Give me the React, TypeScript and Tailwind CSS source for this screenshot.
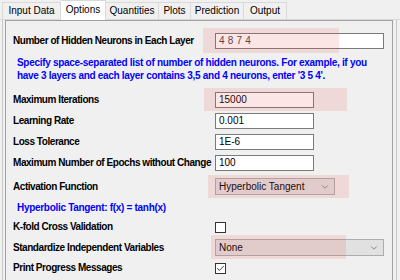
import { ChevronDown, Check } from "lucide-react";

const tabs = [
  { name: "Input Data", w: "w-[59px]" },
  { name: "Options", w: "w-[45px]", active: true },
  { name: "Quantities", w: "w-[53px]" },
  { name: "Plots", w: "w-[32px]" },
  { name: "Prediction", w: "w-[53px]" },
  { name: "Output", w: "w-[43px]" },
];

function Highlight({ className }: { className: string }) {
  return <div className={`pointer-events-none absolute bg-[rgba(230,80,80,0.15)] ${className}`} />;
}

function Label({ children }: { children: React.ReactNode }) {
  return <div className="w-[202px] shrink-0 font-bold tracking-[-0.45px] text-black">{children}</div>;
}

function TextBox({ value, wide }: { value: string; wide?: boolean }) {
  return (
    <div
      className={`${wide ? "w-[169px]" : "w-[99px]"} flex h-[16px] items-center border border-[#7a7a7a] bg-white pl-[3px] text-black`}
    >
      {value}
    </div>
  );
}

function Combo({ value, wide }: { value: string; wide?: boolean }) {
  return (
    <div
      className={`${wide ? "w-[169px]" : "w-[120px]"} flex h-[17px] items-center justify-between border border-[#adadad] bg-[#e1e1e1] pl-[3px] pr-[4px] text-black`}
    >
      <span>{value}</span>
      <ChevronDown className="h-[10px] w-[10px] text-[#555]" strokeWidth={1.5} />
    </div>
  );
}

function CheckBox({ checked }: { checked?: boolean }) {
  return (
    <div className="flex h-[11px] w-[11px] items-center justify-center border border-[#333] bg-white">
      {checked && <Check className="h-[9px] w-[9px] text-[#333]" strokeWidth={2.5} />}
    </div>
  );
}

export default function App() {
  return (
    <div className="flex h-[280px] w-[400px] flex-col overflow-hidden bg-[#f0f0f0] font-['Liberation_Sans',Arial,sans-serif] text-[10px] leading-none">
      {/* Tabs */}
      <div className="flex h-[20px] shrink-0 items-end border-b border-[#d9d9d9] pl-[2px]">
        {tabs.map((t, i) => (
          <div
            key={t.name}
            className={`${t.w} flex shrink-0 items-center justify-center border-t border-r border-[#d9d9d9] ${i === 0 ? "border-l" : ""} ${
              t.active ? "relative z-10 -mb-px h-[20px] bg-white pb-[2px]" : "h-[17px] bg-[#f0f0f0]"
            } text-black`}
          >
            {t.name}
          </div>
        ))}
      </div>

      {/* Tab page */}
      <div className="ml-[2px] flex w-[395px] flex-1 border-l border-r border-[#c8c8c8]">
        <div className="ml-[2px] flex w-[388px] flex-col border-l border-t border-r border-[#a0a0a0] pl-[7px]">
          <div className="mt-[12px] flex h-[16px] items-center">
            <Label>Number of Hidden Neurons in Each Layer</Label>
            <div className="relative">
              <Highlight className="-left-[12px] -top-[5px] h-[25px] w-[136px]" />
              <div className="flex h-[16px] w-[169px] items-center border border-[#7a7a7a] bg-white pl-[3px] tracking-[0.2px] text-[#444]">
                4 8 7 4
              </div>
            </div>
          </div>

          <div className="mt-[7px] pl-[4px] font-bold leading-[13px] tracking-[-0.3px] text-[#0000ff]">
            <div>Specify space-separated list of number of hidden neurons. For example, if you</div>
            <div>have 3 layers and each layer contains 3,5 and 4 neurons, enter '3 5 4'.</div>
          </div>

          <div className="mt-[10px] flex h-[16px] items-center">
            <Label>Maximum Iterations</Label>
            <div className="relative">
              <Highlight className="-left-[11px] -top-[4px] h-[23px] w-[143px]" />
              <TextBox value="15000" />
            </div>
          </div>

          <div className="mt-[5px] flex h-[16px] items-center">
            <Label>Learning Rate</Label>
            <TextBox value="0.001" />
          </div>

          <div className="mt-[5px] flex h-[16px] items-center">
            <Label>Loss Tolerance</Label>
            <TextBox value="1E-6" />
          </div>

          <div className="mt-[5px] flex h-[16px] items-center">
            <Label>Maximum Number of Epochs without Change</Label>
            <TextBox value="100" />
          </div>

          <div className="mt-[7px] flex h-[17px] items-center">
            <Label>Activation Function</Label>
            <div className="relative">
              <Highlight className="-left-[7px] -top-[3px] h-[23px] w-[141px]" />
              <Combo value="Hyperbolic Tangent" />
            </div>
          </div>

          <div className="mt-[6px] pl-[4px] font-bold leading-[13px] tracking-[-0.3px] text-[#0000ff]">
            Hyperbolic Tangent: f(x) = tanh(x)
          </div>

          <div className="mt-[5px] flex h-[16px] items-center">
            <Label>K-fold Cross Validation</Label>
            <CheckBox />
          </div>

          <div className="mt-[4px] flex h-[17px] items-center">
            <Label>Standardize Independent Variables</Label>
            <div className="relative">
              <Highlight className="-left-[4px] -top-[4px] h-[24px] w-[135px]" />
              <Combo value="None" wide />
            </div>
          </div>

          <div className="mt-[4px] flex h-[16px] items-center">
            <Label>Print Progress Messages</Label>
            <CheckBox checked />
          </div>
        </div>
      </div>
    </div>
  );
}
